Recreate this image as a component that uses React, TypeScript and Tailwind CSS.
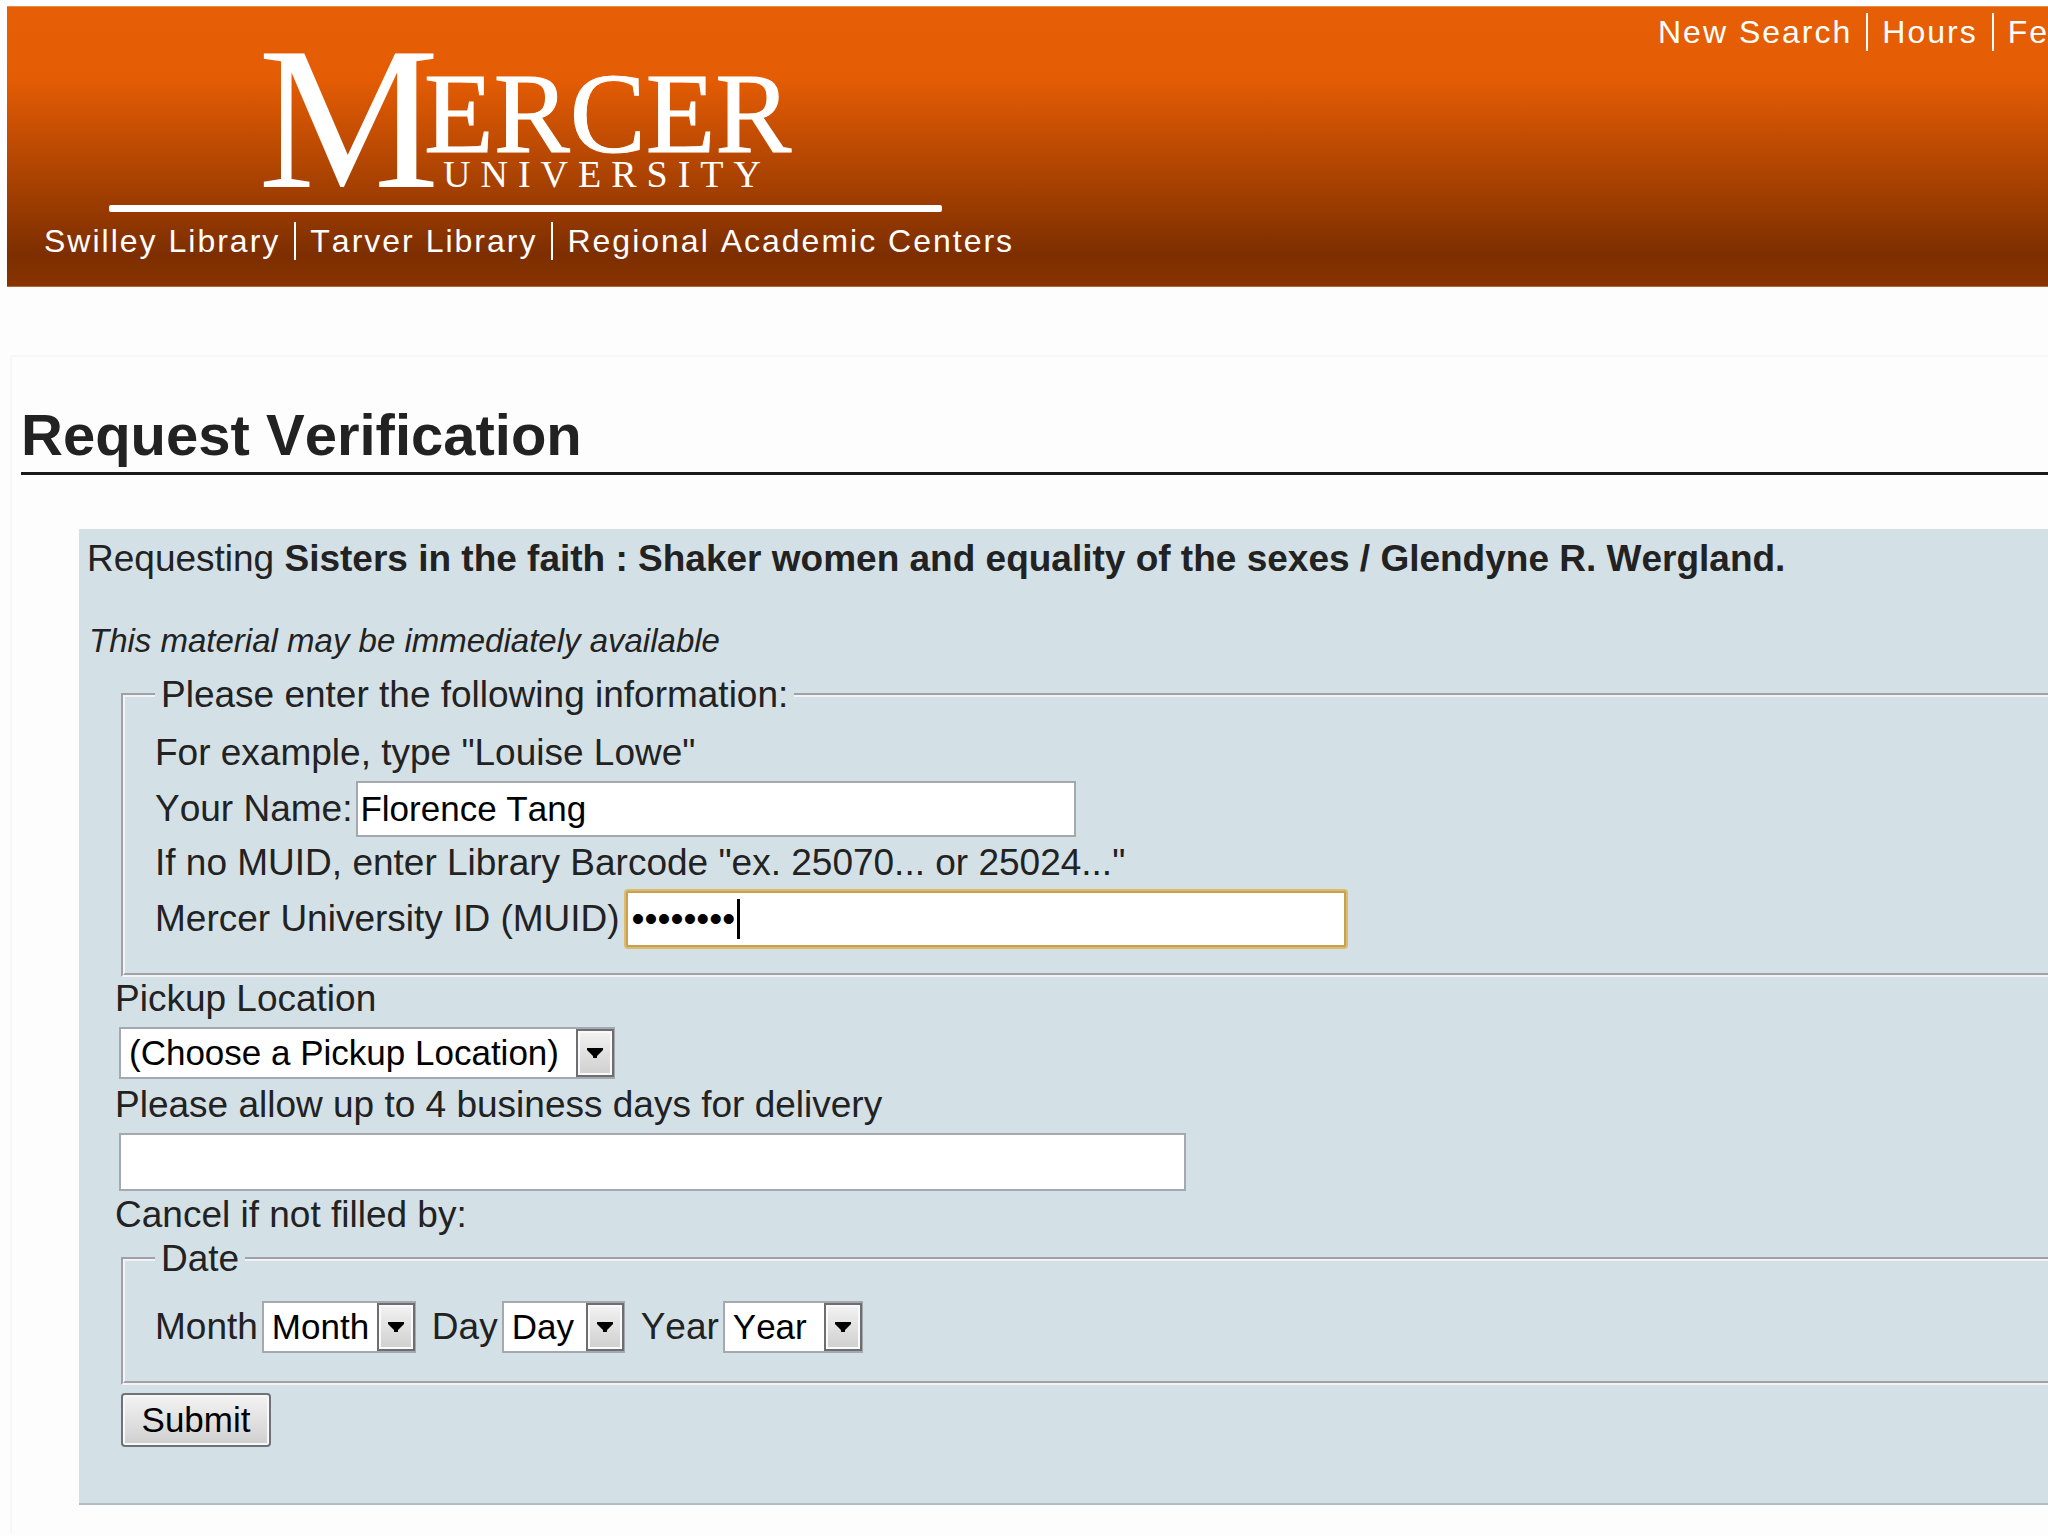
import React, { useState } from 'react';

const topLinks = ['New Search', 'Hours', 'Feedback'];
const libraryLinks = ['Swilley Library', 'Tarver Library', 'Regional Academic Centers'];

function LinkBar({ links }: { links: string[] }) {
  return (
    <ul className="flex text-[32px] leading-[38px] tracking-[2px] whitespace-nowrap text-white">
      {links.map((link) => (
        <li
          key={link}
          className="border-l-2 border-white px-[14px] first:border-l-0 first:pl-0"
        >
          <a href="#" className="block hover:underline">
            {link}
          </a>
        </li>
      ))}
    </ul>
  );
}

function MercerLogo() {
  return (
    <svg
      viewBox="0 0 833 161"
      className="block h-[161px] w-[833px] overflow-visible font-['Liberation_Serif',serif]"
      fill="#fff"
      role="img"
      aria-label="Mercer University"
    >
      <text x="150" y="136" fontSize="204">
        M
      </text>
      <text x="316" y="101" fontSize="114" stroke="#fff" strokeWidth="1">
        ERCER
      </text>
      <text x="335" y="136" fontSize="38" className="tracking-[10px]">
        UNIVERSITY
      </text>
      <rect x="1" y="154" width="833" height="7" rx="2" />
    </svg>
  );
}

interface SelectBoxProps {
  id: string;
  options: string[];
  className: string;
}

function SelectBox({ id, options, className }: SelectBoxProps) {
  return (
    <div className={`relative h-[52px] ${className}`}>
      <select
        id={id}
        className="block h-full w-full appearance-none border-2 border-[#a4a8af] bg-white pl-2 text-[35px] leading-[44px] text-black outline-none"
      >
        {options.map((option) => (
          <option key={option}>{option}</option>
        ))}
      </select>
      {/* Drop-down arrow drawn over the native control */}
      <span className="pointer-events-none absolute inset-y-[2px] right-px flex w-[38px] items-center justify-center border-2 border-[#6c6e72] bg-linear-to-b from-[#f3f3f3] to-[#cfcfcf] shadow-[inset_0_0_0_2px_#fafafa]">
        <svg viewBox="0 0 16 10" className="h-[10px] w-4" aria-hidden="true">
          <path d="M0 0h16v2L10 8v2H6V8L0 2z" fill="#000" />
        </svg>
      </span>
    </div>
  );
}

function Group({ legend, children }: { legend: string; children: React.ReactNode }) {
  return (
    <fieldset className="-mr-2 ml-1.5 border-4 border-[#f2f3f8] pl-[30px] [border-style:groove]">
      <legend className="px-1.5">{legend}</legend>
      {children}
    </fieldset>
  );
}

export default function App() {
  const [name, setName] = useState('Florence Tang');
  const [muid, setMuid] = useState('25070123');
  const [note, setNote] = useState('');

  return (
    <div className="min-h-screen overflow-hidden bg-[#fdfdfe] pt-1.5 pl-[7px] font-['Liberation_Sans',Arial,sans-serif] text-[#222] [font-kerning:none]">
      <header className="border-t border-b border-t-[#e88a4d] border-b-[#b0673a] bg-[linear-gradient(to_bottom,#e65f05_0%,#e45c04_26%,#7d2e00_89%,#883400_100%)] pt-1.5 pb-[26px]">
        <nav aria-label="Site" className="ml-auto w-[390px] overflow-hidden">
          <LinkBar links={topLinks} />
        </nav>
        <div className="pl-[101px]">
          <MercerLogo />
        </div>
        <nav aria-label="Libraries" className="mt-[10px] pl-[37px]">
          <LinkBar links={libraryLinks} />
        </nav>
      </header>

      <main className="mt-[68px] ml-[3px] border-t-2 border-l-2 border-[#f8f5fb] pb-7 pl-[9px]">
        <h1 className="mt-[41px] border-b-[3px] border-[#1a1a1a] text-[58px] leading-[74px] font-bold">
          Request Verification
        </h1>

        <form
          className="mt-[54px] ml-[58px] border-b-2 border-[#b4bbc1] bg-[#d3e0e6] pt-2 pb-14 pl-2 text-[37px] leading-[44px]"
          onSubmit={(e) => e.preventDefault()}
        >
          <p className="whitespace-nowrap">
            Requesting{' '}
            <strong>
              Sisters in the faith : Shaker women and equality of the sexes / Glendyne R. Wergland.
            </strong>
          </p>
          <p className="mt-[38px] pl-0.5 text-[33px] italic">
            This material may be immediately available
          </p>

          <div className="mt-[10px] pl-7">
            <Group legend="Please enter the following information:">
              <p className="pt-3.5">For example, type "Louise Lowe"</p>
              <div className="mt-1.5 flex items-center">
                <label htmlFor="name">Your Name:</label>
                <input
                  id="name"
                  type="text"
                  value={name}
                  onChange={(e) => setName(e.target.value)}
                  className="ml-1 h-14 w-[720px] border-2 border-[#a4a8af] bg-white px-0.5 text-[35px] text-black outline-none"
                />
              </div>
              <p className="mt-1">If no MUID, enter Library Barcode "ex. 25070... or 25024..."</p>
              <div className="mt-1.5 mb-[26px] flex items-center">
                <label htmlFor="muid">Mercer University ID (MUID)</label>
                <div className="relative ml-1.5">
                  <input
                    id="muid"
                    type="password"
                    value={muid}
                    onChange={(e) => setMuid(e.target.value)}
                    className="block h-14 w-[720px] rounded-xs border-2 border-[#c8a052] bg-white px-1 text-[37px] text-black shadow-[0_0_0_2px_#dcbc6c] outline-none"
                  />
                  <span className="absolute top-2 left-[111px] h-10 w-[3px] bg-black" />
                </div>
              </div>
            </Group>

            <label htmlFor="pickup" className="block">
              Pickup Location
            </label>
            <SelectBox
              id="pickup"
              options={['(Choose a Pickup Location)']}
              className="mt-1.5 ml-1 w-[496px]"
            />
            <label htmlFor="note" className="mt-1 block">
              Please allow up to 4 business days for delivery
            </label>
            <input
              id="note"
              type="text"
              value={note}
              onChange={(e) => setNote(e.target.value)}
              className="mt-1.5 ml-1 block h-[58px] w-[1067px] border-2 border-[#a4a8af] bg-white px-0.5 text-[35px] text-black outline-none"
            />
            <p className="mt-0.5">Cancel if not filled by:</p>

            <Group legend="Date">
              <div className="flex items-center pt-5 pb-7">
                <label htmlFor="month">Month</label>
                <SelectBox id="month" options={['Month']} className="ml-1 w-[154px]" />
                <label htmlFor="day" className="ml-4">
                  Day
                </label>
                <SelectBox id="day" options={['Day']} className="ml-1 w-[123px]" />
                <label htmlFor="year" className="ml-4">
                  Year
                </label>
                <SelectBox id="year" options={['Year']} className="ml-1 w-[140px]" />
              </div>
            </Group>

            <button
              type="submit"
              className="mt-2 ml-1.5 block h-[54px] w-[150px] rounded-sm border-2 border-[#6f7276] bg-linear-to-b from-[#f4f4f4] to-[#cfcfcf] text-[35px] text-black shadow-[inset_0_0_0_2px_#f8f8f8]"
            >
              Submit
            </button>
          </div>
        </form>
      </main>
    </div>
  );
}
